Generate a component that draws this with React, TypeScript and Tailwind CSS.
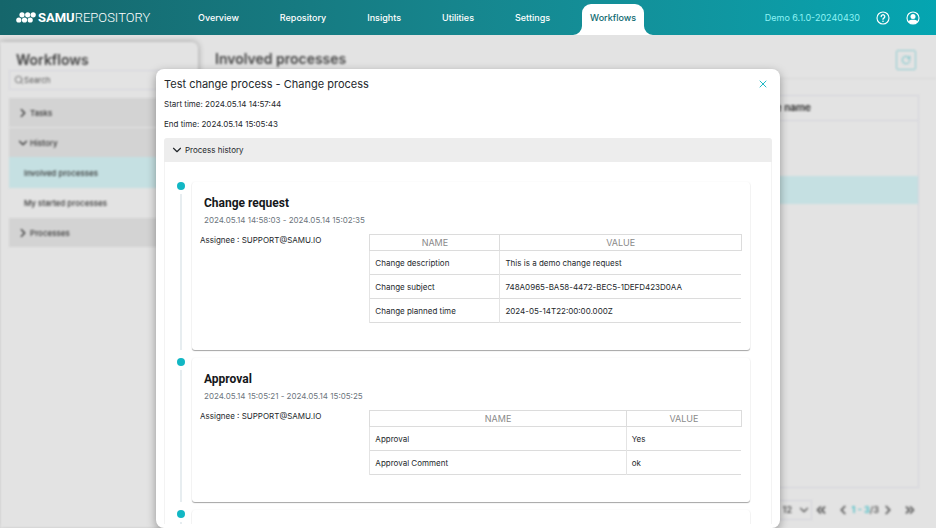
import React, { useState } from 'react';
import { ChevronDown, ChevronLeft, ChevronRight, ChevronsLeft, ChevronsRight, RotateCw, Search, X } from 'lucide-react';

interface Field {
  name: string;
  value: string;
}

interface HistoryStep {
  title: string;
  period: string;
  assignee: string;
  nameWidth: string;
  fields: Field[];
}

const navItems = ['Overview', 'Repository', 'Insights', 'Utilities', 'Settings'];

const steps: HistoryStep[] = [
  {
    title: 'Change request',
    period: '2024.05.14 14:58:03 - 2024.05.14 15:02:35',
    assignee: 'SUPPORT@SAMU.IO',
    nameWidth: 'w-[35%]',
    fields: [
      { name: 'Change description', value: 'This is a demo change request' },
      { name: 'Change subject', value: '748A0965-BA58-4472-BEC5-1DEFD423D0AA' },
      { name: 'Change planned time', value: '2024-05-14T22:00:00.000Z' },
    ],
  },
  {
    title: 'Approval',
    period: '2024.05.14 15:05:21 - 2024.05.14 15:05:25',
    assignee: 'SUPPORT@SAMU.IO',
    nameWidth: 'w-[69%]',
    fields: [
      { name: 'Approval', value: 'Yes' },
      { name: 'Approval Comment', value: 'ok' },
    ],
  },
];

function Logo() {
  return (
    <a href="#" className="flex w-[182px] shrink-0 items-center gap-[2px] font-['Roboto',sans-serif] text-[13px] leading-none text-white">
      <svg viewBox="0 0 20 11" className="h-[11px] w-5" fill="currentColor">
        <circle cx="6" cy="2.8" r="2.6" />
        <circle cx="11.7" cy="2.8" r="2.6" />
        <circle cx="17.2" cy="2.8" r="2.6" />
        <circle cx="2.8" cy="8" r="2.6" />
        <circle cx="8.5" cy="8" r="2.6" />
        <circle cx="14.2" cy="8" r="2.6" />
      </svg>
      <span>
        <span className="font-bold">SAMU</span>
        <span className="font-light">REPOSITORY</span>
      </span>
    </a>
  );
}

function Header() {
  return (
    <header className="flex h-[35px] shrink-0 items-center bg-linear-to-r from-[#15666b] via-[#16868e] to-[#04a5b1] pl-4 pr-4">
      <Logo />
      <nav className="flex h-full items-center gap-[41px] text-[9px] font-medium text-white">
        {navItems.map((item) => (
          <a key={item} href="#">{item}</a>
        ))}
        <a href="#" className="relative -ml-[9px] mt-1 flex h-[31px] items-center rounded-t-[9px] bg-white px-2 pb-1 text-[#0d6970]">
          Workflows
          {/* Flared feet of the active tab */}
          <svg viewBox="0 0 9 9" className="absolute bottom-0 -left-[9px] size-[9px]" fill="white">
            <path d="M9 0v9H0A9 9 0 0 0 9 0z" />
          </svg>
          <svg viewBox="0 0 9 9" className="absolute -right-[9px] bottom-0 size-[9px]" fill="white">
            <path d="M0 0v9h9A9 9 0 0 1 0 0z" />
          </svg>
        </a>
      </nav>
      <div className="ml-auto flex items-center gap-4 text-white">
        <span className="text-[9px] text-[#8df3f5]">Demo 6.1.0-20240430</span>
        <button type="button" aria-label="Help">
          <svg viewBox="0 0 14 14" className="size-[14px]" fill="none" stroke="currentColor" strokeWidth="1.1" strokeLinecap="round">
            <circle cx="7" cy="7" r="6" />
            <path d="M5.2 5.5a1.8 1.8 0 1 1 2.7 1.6c-.6.35-.9.6-.9 1.2" strokeWidth="1.3" />
            <circle cx="7" cy="10.2" r=".8" fill="currentColor" stroke="none" />
          </svg>
        </button>
        <button type="button" aria-label="Account">
          <svg viewBox="0 0 14 14" className="size-[14px]" fill="none">
            <circle cx="7" cy="7" r="6" stroke="currentColor" strokeWidth="1.1" />
            <circle cx="7" cy="5.5" r="2.5" fill="currentColor" />
            <path d="M2.2 10.4C3.6 9.2 5.2 8.8 7 8.8s3.4.4 4.8 1.6A6 6 0 0 1 7 13a6 6 0 0 1-4.8-2.6z" fill="currentColor" />
          </svg>
        </button>
      </div>
    </header>
  );
}

function Sidebar() {
  return (
    <aside className="w-[198px] shrink-0 rounded-tr-md px-[9px] pt-2 shadow-[0_0_6px_rgba(0,0,0,0.35)]">
      <h2 className="px-[7px] text-[14px] leading-5 font-semibold text-[#444]">Workflows</h2>
      <label className="flex h-5 items-center border border-[#d6d6de] px-1">
        <Search className="size-[10px] shrink-0 text-[#666]" strokeWidth={2} />
        <input type="text" placeholder="Search" aria-label="Search" className="w-full text-[8px] placeholder:text-[#555]" />
      </label>
      <ul className="mt-2 text-[8px] font-medium text-[#333]">
        <li className="mb-px flex h-[29px] items-center bg-[#d3d3d3] px-[7px]">
          <ChevronRight className="size-[14px]" />
          Tasks
        </li>
        <li className="flex h-[29px] items-center bg-[#d3d3d3] px-[7px]">
          <ChevronDown className="size-[14px]" />
          History
        </li>
        <li className="flex h-[31px] items-center bg-[#c5e0e2] px-[15px]">Involved processes</li>
        <li className="flex h-[30px] items-center px-[15px]">My started processes</li>
        <li className="flex h-[29px] items-center bg-[#d3d3d3] px-[7px]">
          <ChevronRight className="size-[14px]" />
          Processes
        </li>
      </ul>
    </aside>
  );
}

function ProcessList() {
  return (
    <section className="flex min-w-0 flex-1 flex-col">
      <div className="flex h-[37px] items-center justify-between border-b border-[#d8d8d8] pr-5 pl-[17px]">
        <h1 className="pb-[3px] text-[14px] font-semibold text-[#444]">Involved processes</h1>
        <button type="button" aria-label="Refresh" className="flex size-5 items-center justify-center rounded-xs border border-[#8ecdd1] text-[#5fbfc5]">
          <RotateCw className="size-[10px]" />
        </button>
      </div>
      <div className="mt-4 mr-[17px] ml-[17px] flex-1 border border-[#d3d3dc]">
        <table className="w-full text-[10px] text-[#222]">
          <thead>
            <tr className="h-6 border-b border-[#d3d3dc]">
              <th className="w-[77%]"></th>
              <th className="text-left font-semibold whitespace-nowrap">State name</th>
            </tr>
          </thead>
          <tbody>
            <tr className="h-7"><td colSpan={2}></td></tr>
            <tr className="h-7"><td colSpan={2}></td></tr>
            <tr className="h-7 bg-[#c5e0e2]"><td colSpan={2}></td></tr>
          </tbody>
        </table>
      </div>
      <div className="flex h-10 items-center justify-end gap-2 pt-1 pr-[19px] text-[9px] font-semibold text-[#555]">
        <div className="flex items-center gap-[2px]">
          <div className="relative flex items-center">
            <select aria-label="Rows per page" className="h-5 w-[60px] appearance-none border border-[#d3d3dc] pl-[30px]">
              <option>12</option>
            </select>
            <ChevronDown className="pointer-events-none absolute right-[1px] size-[14px]" />
          </div>
          <button type="button" aria-label="First page"><ChevronsLeft className="size-[14px]" strokeWidth={3} /></button>
        </div>
        <div className="flex items-center gap-[2px]">
          <button type="button" aria-label="Previous page"><ChevronLeft className="size-[14px]" strokeWidth={3} /></button>
          <span><span className="text-[#3fbcc4]">1 - 3</span>/3</span>
          <button type="button" aria-label="Next page"><ChevronRight className="size-[14px]" strokeWidth={3} /></button>
        </div>
        <button type="button" aria-label="Last page"><ChevronsRight className="size-[14px]" strokeWidth={3} /></button>
      </div>
    </section>
  );
}

function TimelineItem({ step }: { step?: HistoryStep }) {
  return (
    <li className="flex gap-[7px]">
      <div className="flex w-2 flex-col items-center gap-1">
        <span className="size-2 shrink-0 rounded-full bg-[#12b7c4]" />
        <span className="w-[2px] flex-1 bg-[#e7edf0]" />
      </div>
      <article className="min-h-20 min-w-0 flex-1 rounded-[3px] px-2 pt-3 pb-[27px] shadow-[0_1px_1px_rgba(0,0,0,0.35),0_0_2px_rgba(0,0,0,0.06)]">
        {step && (
          <>
            <h3 className="px-1 font-['Roboto',sans-serif] text-[12px] leading-[18px] font-bold text-[#15171a]">{step.title}</h3>
            <p className="px-1 text-[8px] leading-4 text-[#6c757d]">{step.period}</p>
            <div className="mt-[6px] grid grid-cols-[5fr_11fr]">
              <p className="text-[8px] leading-3">Assignee : {step.assignee}</p>
              <table className="w-full table-fixed border-collapse text-left text-[8px]">
                <thead>
                  <tr className="h-4 text-center text-[9px] leading-3 text-[#8a8a8a]">
                    <th className={`border border-[#dcdcdc] font-normal ${step.nameWidth}`}>NAME</th>
                    <th className="border border-[#dcdcdc] font-normal">VALUE</th>
                  </tr>
                </thead>
                <tbody>
                  {step.fields.map((field) => (
                    <tr key={field.name} className="h-6 border-b border-[#dcdcdc]">
                      <td className="border-x border-[#e4e4e4] px-[5px]">{field.name}</td>
                      <td className="px-[5px]">{field.value}</td>
                    </tr>
                  ))}
                </tbody>
              </table>
            </div>
          </>
        )}
      </article>
    </li>
  );
}

function ProcessDialog() {
  const [open, setOpen] = useState(true);

  return (
    <div role="dialog" aria-label="Test change process - Change process" className="flex w-2/3 flex-col overflow-hidden rounded-lg bg-white px-2 pb-1 text-[8px] text-[#24282c] shadow-[0_3px_10px_rgba(0,0,0,0.35)]">
      <div className="flex h-[25px] shrink-0 items-center justify-between pt-[5px] pr-[3px]">
        <h2 className="text-[11px]">Test change process - Change process</h2>
        <button type="button" aria-label="Close" className="text-[#22b9c6]">
          <X className="size-3" />
        </button>
      </div>
      <p className="py-1 leading-3">Start time: 2024.05.14 14:57:44</p>
      <p className="py-1 leading-3">End time: 2024.05.14 15:05:43</p>
      <button
        type="button"
        aria-expanded={open}
        onClick={() => setOpen(!open)}
        className="mt-1 flex h-6 shrink-0 items-center gap-px rounded-t-[3px] bg-[#ededed] px-[6px]"
      >
        <ChevronDown className="size-[14px]" />
        Process history
      </button>
      {open && (
        <ul className="flex min-h-0 flex-1 flex-col gap-2 overflow-hidden border-x border-[#f3f3f3] px-3 pt-5 pr-[21px]">
          {steps.map((step) => (
            <TimelineItem key={step.title} step={step} />
          ))}
          <TimelineItem />
        </ul>
      )}
    </div>
  );
}

export default function App() {
  return (
    <div className="relative flex h-screen flex-col overflow-hidden bg-[#e3e3e3] font-['Inter',sans-serif]">
      <Header />
      <main className="flex min-h-0 flex-1 pt-[7px] blur-[1px]">
        <Sidebar />
        <ProcessList />
      </main>
      <div className="absolute inset-0 flex justify-center pt-[69px]">
        <ProcessDialog />
      </div>
    </div>
  );
}
